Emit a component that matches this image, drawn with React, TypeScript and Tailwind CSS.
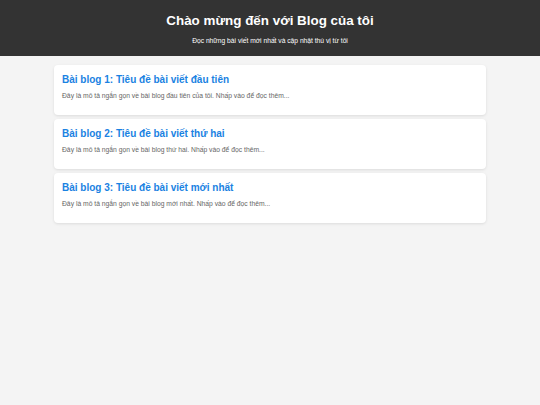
const posts = [
  {
    title: "Bài blog 1: Tiêu đề bài viết đầu tiên",
    desc: "Đây là mô tả ngắn gọn về bài blog đầu tiên của tôi. Nhấp vào để đọc thêm...",
  },
  {
    title: "Bài blog 2: Tiêu đề bài viết thứ hai",
    desc: "Đây là mô tả ngắn gọn về bài blog thứ hai. Nhấp vào để đọc thêm...",
  },
  {
    title: "Bài blog 3: Tiêu đề bài viết mới nhất",
    desc: "Đây là mô tả ngắn gọn về bài blog mới nhất. Nhấp vào để đọc thêm...",
  },
];

export default function App() {
  return (
    <div className="min-h-[405px] bg-[#f4f4f4] font-['Liberation_Sans',Arial,sans-serif]">
      <header className="bg-[#333] text-white text-center h-[56px] pt-[13px]">
        <h1 className="text-[13.4px] font-bold leading-[16px]">Chào mừng đến với Blog của tôi</h1>
        <p className="text-[6.7px] leading-[8px] mt-[8px]">Đọc những bài viết mới nhất và cập nhật thú vị từ tôi</p>
      </header>
      <main className="w-[432px] mx-auto pt-[9px] flex flex-col gap-[4px]">
        {posts.map((p) => (
          <div key={p.title} className="bg-white rounded-[4px] shadow-[0_1px_3px_rgba(0,0,0,0.1)] h-[50px] px-[8px] pt-[9px]">
            <h2 className="text-[10px] font-bold text-[#1a82e2] leading-[12px]">{p.title}</h2>
            <p className="text-[6.75px] text-[#666] leading-[8px] mt-[6px]">{p.desc}</p>
          </div>
        ))}
      </main>
    </div>
  );
}
